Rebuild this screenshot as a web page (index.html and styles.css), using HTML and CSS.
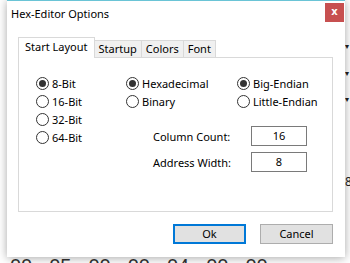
FILE: index.html
```html
<!DOCTYPE html>
<html>
  <head>
    <meta charset="UTF-8">
    <title>Hex-Editor Options</title>
    <link rel="stylesheet" href="styles.css">
  </head>
  <body>
    <div id="desktop">
      <!-- Hex view of the app behind the dialog -->
      <div id="hex-row">
        <span>00</span><span>05</span><span>00</span><span>00</span><span>04</span><span>00</span><span>00</span>
      </div>
      <div id="side-marks">
        <span class="mark m1">&#9662;</span>
        <span class="mark m2">&#9662;</span>
        <span class="mark m3">&#9662;</span>
        <span class="mark m4">8</span>
      </div>

      <!-- Dialog window -->
      <div id="window">
        <div id="titlebar">
          <span id="title">Hex-Editor Options</span>
          <span id="close">x</span>
        </div>

        <div id="dialog-body">
          <div id="tabs">
            <div class="tab active">Start Layout</div>
            <div class="tab">Startup</div>
            <div class="tab">Colors</div>
            <div class="tab">Font</div>
          </div>

          <div id="pane">
            <div class="col col-bits">
              <div class="radio checked"><span class="circle"></span>8-Bit</div>
              <div class="radio"><span class="circle"></span>16-Bit</div>
              <div class="radio"><span class="circle"></span>32-Bit</div>
              <div class="radio"><span class="circle"></span>64-Bit</div>
            </div>

            <div class="right-side">
              <div class="radio-rows">
                <div class="col col-base">
                  <div class="radio checked"><span class="circle"></span>Hexadecimal</div>
                  <div class="radio"><span class="circle"></span>Binary</div>
                </div>
                <div class="col">
                  <div class="radio checked"><span class="circle"></span>Big-Endian</div>
                  <div class="radio"><span class="circle"></span>Little-Endian</div>
                </div>
              </div>

              <div id="fields">
                <span class="field-label">Column Count:</span>
                <span class="field-input">16</span>
                <span class="field-label">Address Width:</span>
                <span class="field-input">8</span>
              </div>
            </div>
          </div>

          <div id="buttons">
            <div class="btn btn-default">Ok</div>
            <div class="btn">Cancel</div>
          </div>
        </div>
      </div>
    </div>
  </body>
</html>
```

FILE: styles.css
```css
/* Reset */
* {
  box-sizing: border-box;
  margin: 0;
  padding: 0;
}

html, body {
  width: 100%;
  height: 100%;
  background-color: #ffffff;
  overflow: hidden;
}

/* Screen area behind the dialog */
#desktop {
  position: relative;
  width: 350px;
  height: 263px;
  overflow: hidden;
  background-color: #ffffff;
  font-family: "Noto Sans", "Open Sans", sans-serif;
  font-size: 11px;
  color: #000000;
}

/* Bytes of the hex view peeking out below the dialog */
#hex-row {
  position: absolute;
  top: 256px;
  left: 10px;
  display: flex;
  gap: 17px;
  font-family: "Liberation Sans", Arial, sans-serif;
  font-size: 20px;
  line-height: 20px;
  color: #333333;
}

#side-marks .mark {
  position: absolute;
  left: 345px;
  font-size: 8px;
  line-height: 8px;
  color: #222222;
}

#side-marks .m1 { top: 42px; }
#side-marks .m2 { top: 69px; }
#side-marks .m3 { top: 95px; }
#side-marks .m4 { top: 176px; font-size: 12px; line-height: 12px; }

/* Dialog window */
#window {
  position: absolute;
  top: 0;
  left: 7px;
  width: 338px;
  height: 257px;
  background-color: #ffffff;
  border-top: 1px solid #6ac4d6;
  box-shadow: 0 1px 9px rgba(0, 0, 0, 0.35);
  display: flex;
  flex-direction: column;
}

#titlebar {
  height: 29px;
  display: flex;
  align-items: flex-start;
  justify-content: space-between;
  padding-left: 4px;
}

#title {
  font-size: 11px;
  line-height: 16px;
  margin-top: 5px;
}

#close {
  width: 19px;
  height: 19px;
  margin-top: 2px;
  margin-right: 1px;
  background-color: #c75050;
  color: #ffffff;
  font-family: "DejaVu Sans", sans-serif;
  font-weight: bold;
  font-size: 10px;
  line-height: 17px;
  text-align: center;
}

#dialog-body {
  flex: 1;
  padding: 7px 12px 0 11px;
  display: flex;
  flex-direction: column;
}

/* Tab strip */
#tabs {
  display: flex;
  align-items: flex-end;
  height: 20px;
  position: relative;
  z-index: 1;
}

.tab {
  height: 17px;
  padding: 0 4px;
  margin-right: -1px;
  background-color: #f0f0f0;
  border: 1px solid #d9d9d9;
  border-bottom: none;
  line-height: 15px;
}

.tab.active {
  height: 21px;
  margin-bottom: -1px;
  padding: 0 6px;
  background-color: #ffffff;
  line-height: 17px;
  position: relative;
  z-index: 2;
}

/* Tab page */
#pane {
  height: 155px;
  border: 1px solid #d9d9d9;
  background-color: #ffffff;
  display: flex;
  padding: 16px 0 0 17px;
}

.col {
  display: flex;
  flex-direction: column;
}

.col-bits { width: 90px; }
.col-base { width: 111px; }

.radio {
  height: 18px;
  display: flex;
  align-items: center;
  gap: 3px;
  white-space: nowrap;
}

.circle {
  width: 13px;
  height: 13px;
  border: 1px solid #333333;
  border-radius: 50%;
  background-color: #ffffff;
  display: flex;
  align-items: center;
  justify-content: center;
  flex-shrink: 0;
}

.radio.checked .circle::after {
  content: "";
  width: 7px;
  height: 7px;
  border-radius: 50%;
  background-color: #333333;
}

.radio-rows {
  display: flex;
}

#fields {
  margin: 16px 0 0 27px;
  display: grid;
  grid-template-columns: 98px 56px;
  row-gap: 6px;
  align-items: center;
}

.field-input {
  height: 20px;
  border: 1px solid #7a7a7a;
  text-align: center;
  line-height: 18px;
}

/* Dialog buttons */
#buttons {
  margin-top: 12px;
  display: flex;
  justify-content: flex-end;
  gap: 14px;
}

.btn {
  width: 73px;
  height: 20px;
  background-color: #e1e1e1;
  border: 1px solid #adadad;
  text-align: center;
  line-height: 18px;
}

.btn-default {
  border: 2px solid #0078d7;
  line-height: 16px;
}
```
